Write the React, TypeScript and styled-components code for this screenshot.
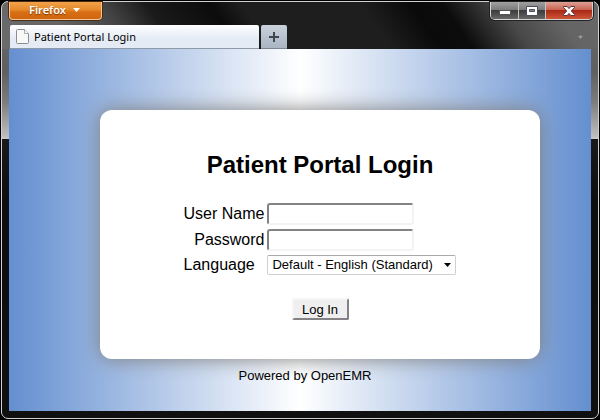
import React from "react";
import styled, { createGlobalStyle, css } from "styled-components";

const GlobalStyle = createGlobalStyle`
  * { box-sizing: border-box; }
  body {
    margin: 0;
    background: #000;
    color: #000;
    font-family: "Liberation Sans", Arial, sans-serif;
  }
`;

const Desktop = styled.div`
  display: flex;
  min-height: 100vh;
  padding: 1px;
`;

const WindowFrame = styled.div`
  flex: 1;
  display: flex;
  flex-direction: column;
  padding: 0 7px 7px;
  border: 1px solid #d2d2d2;
  border-radius: 7px;
  background:
    linear-gradient(55deg, #6b6b6b 0, #646464 12%, #444 21%, #1a1a1a 28%, #0c0c0c 38%, #1e1e1e 43%, #1e1e1e 62%, #0a0a0a 70%, #0c0c0c 75%, #484848 84%, #646464 92%, #686868 100%) top / 100% 47px no-repeat,
    linear-gradient(180deg, #686868 0, #606060 70px, #7c7c7c 100px, #bdbdbd 134px, #c8c8c8 137px, #1a1a1a 137px, #0e0e0e 200px, #101010 100%);
`;

const TitleBar = styled.header`
  display: flex;
  justify-content: space-between;
  align-items: flex-start;
  height: 23px;
`;

const AppMenuButton = styled.button`
  display: flex;
  align-items: center;
  justify-content: center;
  gap: 7px;
  height: 18px;
  width: 93px;
  padding: 0 2px 2px 0;
  border: 1px solid #f3c79a;
  border-top: 0;
  border-radius: 0 0 4px 4px;
  background: linear-gradient(#f2a24a, #e58a2c 45%, #d86f14 60%, #cf6510);
  box-shadow: 0 0 0 1px #4a2a10;
  color: #fff;
  font: 600 11px/16px "Noto Sans", "Open Sans", sans-serif;
  text-shadow: 0 1px 1px #7a3a06;
`;

const WindowControls = styled.div`
  display: flex;
  height: 18px;
  margin-right: -2px;
  border: 1px solid #d4d4d4;
  border-top: 0;
  border-radius: 0 0 5px 5px;
  overflow: hidden;
  box-shadow: 0 0 0 1px #222;
`;

const ControlButton = styled.button<{ $close?: boolean }>`
  display: flex;
  align-items: center;
  justify-content: center;
  width: ${(p) => (p.$close ? 47 : 27)}px;
  padding: 0;
  border: 0;
  background: linear-gradient(#a0a0a0, #7c7c7c 45%, #3c3c3c 50%, #666);
  & + & { border-left: 1px solid #c4c4c4; }
  ${(p) =>
    p.$close &&
    css`
      background: linear-gradient(#dda095, #c96453 45%, #a92a16 50%, #cf5537);
    `}
`;

const TabStrip = styled.nav`
  display: flex;
  align-items: stretch;
  gap: 2px;
  height: 24px;
  padding: 0 8px 0 1px;
`;

const Tab = styled.button`
  display: flex;
  align-items: center;
  gap: 5px;
  width: 249px;
  padding: 0 6px;
  border: 0;
  border-radius: 2px 2px 0 0;
  border-bottom: 1px solid #8f9aa8;
  background: linear-gradient(#fff, #e4ebf5 60%, #e4ebf5);
  color: #000;
  font: 11px/16px "Noto Sans", "Open Sans", sans-serif;
  text-align: left;
`;

const NewTabButton = styled.button`
  display: flex;
  align-items: center;
  justify-content: center;
  width: 26px;
  padding: 0;
  border: 0;
  border-bottom: 1px solid #7c8692;
  border-radius: 2px 2px 0 0;
  background: linear-gradient(#c9d1db, #aab5c3);
`;

const TabListButton = styled.button`
  display: flex;
  align-items: center;
  margin-left: auto;
  padding: 0;
  border: 0;
  background: none;
`;

const Page = styled.main`
  flex: 1;
  padding: 61px 51px 24px 91px;
  background: linear-gradient(90deg, #648fd0, #fff 50%, #648fd0);
`;

const LoginCard = styled.form`
  display: flex;
  flex-direction: column;
  align-items: center;
  padding: 40px 24px 39px;
  border-radius: 12px;
  background: #fff;
  box-shadow: 0 0 20px #808080;
`;

const Title = styled.h1`
  margin: 0 0 23px;
  font-size: 24px;
  line-height: 30px;
`;

const Fields = styled.div`
  display: grid;
  grid-template-columns: auto auto;
  align-items: center;
  gap: 4px 3px;
  margin-bottom: 23px;
`;

const Label = styled.label<{ $start?: boolean }>`
  font-size: 16px;
  line-height: 20px;
  text-align: ${(p) => (p.$start ? "left" : "right")};
`;

const TextInput = styled.input`
  width: 147px;
  height: 22px;
  padding: 1px 2px;
  border: 2px solid;
  border-color: #848284 #f4f2f4 #f4f2f4 #848284;
  border-radius: 3px;
  background: #fff;
  font: 13px/16px "Liberation Sans", Arial, sans-serif;
`;

const SelectBox = styled.div`
  display: grid;
  align-items: center;
  svg {
    grid-area: 1 / 1;
    justify-self: end;
    margin-right: 5px;
    pointer-events: none;
  }
`;

const Select = styled.select`
  grid-area: 1 / 1;
  appearance: none;
  width: 189px;
  height: 20px;
  padding: 0 18px 0 4px;
  border: 1px solid #d0d0d0;
  border-top-color: #aaa;
  border-radius: 2px;
  background: #fff;
  color: #000;
  font: 13px/16px "Liberation Sans", Arial, sans-serif;
`;

const SubmitButton = styled.button`
  width: 57px;
  height: 22px;
  padding: 2px 0 0;
  border: 2px solid;
  border-color: #f6f6f6 #848284 #848284 #f6f6f6;
  border-radius: 2px;
  background: #efefef;
  color: #000;
  font: 13px/16px "Liberation Sans", Arial, sans-serif;
`;

const Footer = styled.footer`
  margin: 8px 30px 0 0;
  font-size: 13px;
  line-height: 18px;
  text-align: center;
`;

export default function App() {
  return (
    <>
      <GlobalStyle />
      <Desktop>
        <WindowFrame>
          <TitleBar>
            <AppMenuButton type="button">
              Firefox
              <svg width="7" height="4" viewBox="0 0 7 4" aria-hidden="true">
                <path d="M0 0h7L3.500 4z" fill="#fff" />
              </svg>
            </AppMenuButton>
            <WindowControls>
              <ControlButton type="button" aria-label="Minimize">
                <svg width="12" height="10" viewBox="0 0 12 10">
                  <rect x="0.500" y="4.500" width="11" height="4" fill="#fff" stroke="#555" />
                </svg>
              </ControlButton>
              <ControlButton type="button" aria-label="Maximize">
                <svg width="12" height="10" viewBox="0 0 12 10">
                  <path d="M.5.5h11v9H.5z" fill="#fff" stroke="#4c4f5c" />
                  <path d="M3.500 3.500h5v2h-5z" fill="#888" stroke="#4c4f5c" />
                </svg>
              </ControlButton>
              <ControlButton type="button" aria-label="Close" $close>
                <svg width="12" height="10" viewBox="0 0 12 10">
                  <path d="M.5.5h3.700L6 2.600 7.800.5h3.700v1L8.300 5l3.200 3.500v1H7.800L6 7.400 4.200 9.500H.5v-1L3.700 5 .5 1.500z" fill="#fff" stroke="#5d3538" />
                </svg>
              </ControlButton>
            </WindowControls>
          </TitleBar>
          <TabStrip>
            <Tab type="button">
              <svg width="13" height="15" viewBox="0 0 13 15" aria-hidden="true">
                <path d="M1.500.5h7l4 4v9a1 1 0 0 1-1 1h-10a1 1 0 0 1-1-1v-12a1 1 0 0 1 1-1z" fill="#f8f8f8" stroke="#8e8e8e" />
                <path d="M8.500.5v4h4" fill="#fff" stroke="#a8a8a8" />
              </svg>
              Patient Portal Login
            </Tab>
            <NewTabButton type="button" aria-label="New tab">
              <svg width="10" height="10" viewBox="0 0 10 10">
                <path d="M4 0h2v4h4v2H6v4H4V6H0V4h4z" fill="#3e464f" />
              </svg>
            </NewTabButton>
            <TabListButton type="button" aria-label="List all tabs">
              <svg width="5" height="4" viewBox="0 0 5 4">
                <path d="M0 1h5L2.500 4zM2 0h1v1H2z" fill="#999" />
              </svg>
            </TabListButton>
          </TabStrip>
          <Page>
            <LoginCard onSubmit={(e: React.FormEvent) => e.preventDefault()}>
              <Title>Patient Portal Login</Title>
              <Fields>
                <Label htmlFor="username">User Name</Label>
                <TextInput id="username" type="text" />
                <Label htmlFor="password">Password</Label>
                <TextInput id="password" type="password" />
                <Label htmlFor="language" $start>Language</Label>
                <SelectBox>
                  <Select id="language">
                    <option>Default - English (Standard)</option>
                  </Select>
                  <svg width="7" height="4" viewBox="0 0 7 4" aria-hidden="true">
                    <path d="M0 0h7L3.500 4z" fill="#000" />
                  </svg>
                </SelectBox>
              </Fields>
              <SubmitButton type="submit">Log In</SubmitButton>
            </LoginCard>
            <Footer>Powered by OpenEMR</Footer>
          </Page>
        </WindowFrame>
      </Desktop>
    </>
  );
}
